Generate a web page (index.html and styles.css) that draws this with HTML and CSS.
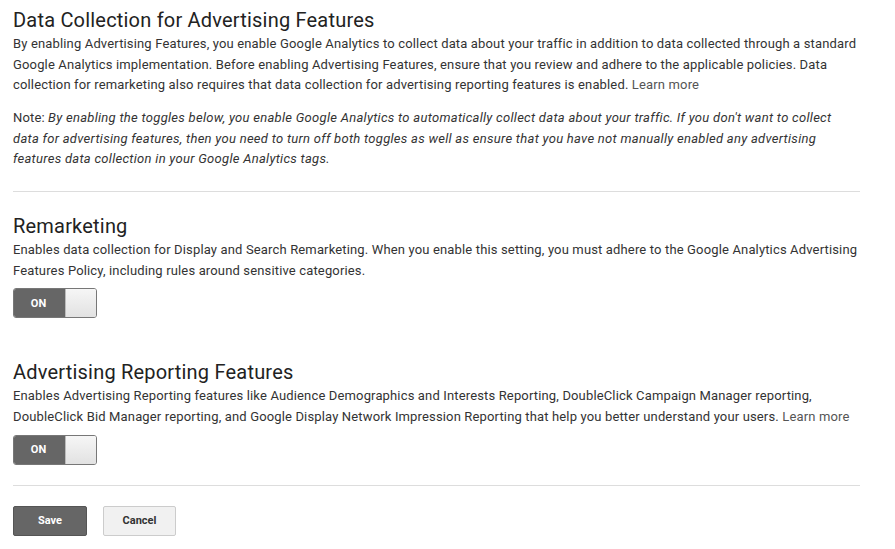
FILE: index.html
```html
<!DOCTYPE html>
<html>
<head>
<meta charset="utf-8">
<link rel="stylesheet" href="styles.css">
</head>
<body>
<div class="page">
  <section class="sec">
    <h2 class="title">Data Collection for Advertising Features</h2>
    <p class="text">By enabling Advertising Features, you enable Google Analytics to collect data about your traffic in addition to data collected through a standard Google Analytics implementation. Before enabling Advertising Features, ensure that you review and adhere to the applicable policies. Data collection for remarketing also requires that data collection for advertising reporting features is enabled. <a class="link">Learn more</a></p>
    <p class="text note">Note: <em>By enabling the toggles below, you enable Google Analytics to automatically collect data about your traffic. If you don't want to collect data for advertising features, then you need to turn off both toggles as well as ensure that you have not manually enabled any advertising features data collection in your Google Analytics tags.</em></p>
  </section>
  <hr class="rule">
  <section class="sec">
    <h2 class="title">Remarketing</h2>
    <p class="text">Enables data collection for Display and Search Remarketing. When you enable this setting, you must adhere to the Google Analytics Advertising Features Policy, including rules around sensitive categories.</p>
    <div class="toggle"><span class="on">ON</span><span class="knob"></span></div>
  </section>
  <section class="sec sec2">
    <h2 class="title">Advertising Reporting Features</h2>
    <p class="text">Enables Advertising Reporting features like Audience Demographics and Interests Reporting, DoubleClick Campaign Manager reporting, DoubleClick Bid Manager reporting, and Google Display Network Impression Reporting that help you better understand your users. <a class="link">Learn more</a></p>
    <div class="toggle"><span class="on">ON</span><span class="knob"></span></div>
  </section>
  <hr class="rule rule2">
  <div class="actions">
    <button class="btn save">Save</button>
    <button class="btn cancel">Cancel</button>
  </div>
</div>
</body>
</html>
```

FILE: styles.css
```css
html, body { margin: 0; padding: 0; background: #fff; }
body { font-family: Roboto, "Noto Sans", Arial, sans-serif; color: #333; }
.page { width: 847px; padding: 6px 0 0 13px; }
.title { margin: 0; font-size: 20px; font-weight: 400; line-height: 28px; color: #222; letter-spacing: 0.2px; }
.text { margin: 0; font-size: 13px; line-height: 20.6px; color: #333; letter-spacing: 0.15px; }
.note { margin-top: 12px; line-height: 20.8px; }
.note em { font-style: italic; letter-spacing: 0.28px; }
.link { color: #555; text-decoration: none; }
.rule { border: 0; border-top: 1px solid #ddd; margin: 21px 0 20px; height: 0; }
.rule2 { margin: 20px 0 20px; }
.toggle { display: flex; width: 82px; height: 28px; margin-top: 7px; border: 1px solid #777; border-radius: 3px; overflow: hidden; }
.on { width: 51px; background: #666; color: #fff; font-size: 11px; font-weight: 700; display: flex; align-items: center; justify-content: center; padding-right: 2px; box-sizing: border-box; }
.knob { flex: 1; background: linear-gradient(#f6f6f6, #e2e2e2); border-left: 1px solid #bbb; }
.sec2 { margin-top: 40px; }
.actions { display: flex; gap: 16px; }
.btn { font-family: Roboto, Arial, sans-serif; font-size: 11px; font-weight: 700; height: 30px; border-radius: 2px; cursor: pointer; padding: 0; }
.save { width: 74px; background: #666; color: #fff; border: 1px solid #555; }
.cancel { width: 73px; background: #f1f1f1; color: #333; border: 1px solid #ccc; }
```
